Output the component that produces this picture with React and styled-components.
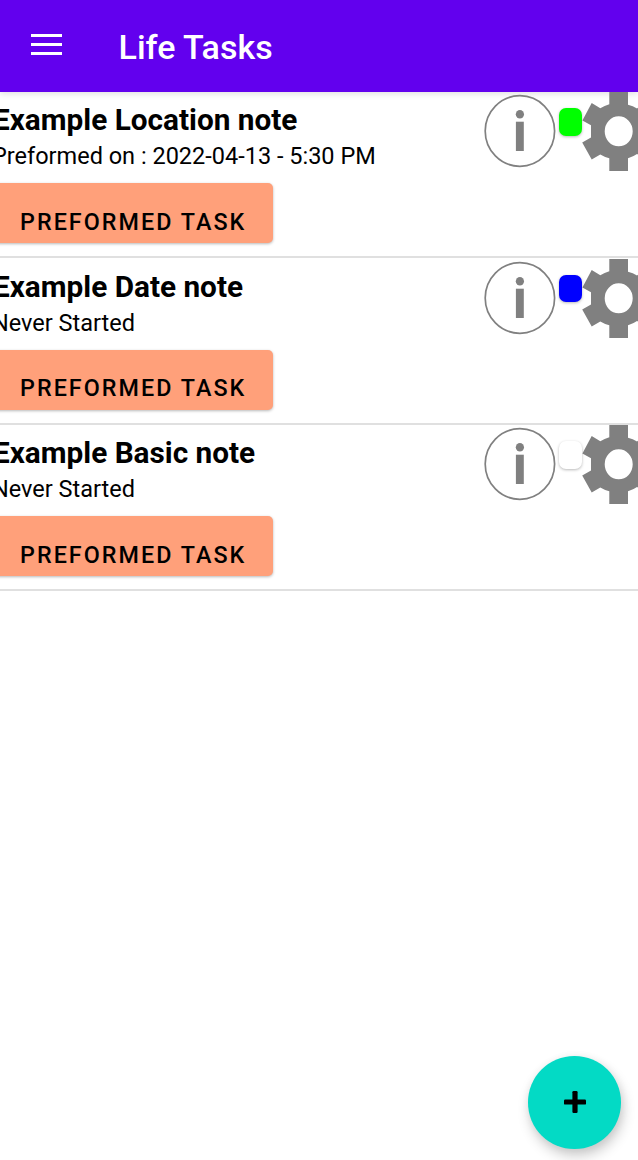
import React from 'react';
import styled, { createGlobalStyle } from 'styled-components';

const GlobalStyle = createGlobalStyle`
  * { box-sizing: border-box; }
  html, body { margin: 0; background: #fff; }
  body { overflow: hidden; font-family: Roboto, "Liberation Sans", sans-serif; color: #000; }
`;

const Screen = styled.div`
  position: relative;
  width: 638px;
  height: 1160px;
  overflow: hidden;
  display: flex;
  flex-direction: column;
  background: #fff;
`;

const Toolbar = styled.header`
  flex: none;
  height: 92px;
  display: flex;
  align-items: flex-start;
  background: #6200ee;
  box-shadow: 0 2px 6px rgba(0, 0, 0, 0.12);
  color: #fff;
`;

const MenuButton = styled.button`
  border: 0;
  padding: 0;
  margin: 34px 0 0 30.6px;
  width: 31px;
  height: 22px;
  background: none;
  svg { display: block; }
`;

const Title = styled.h1`
  margin: 27px 0 0 57px;
  font-size: 34px;
  line-height: 40px;
  font-weight: 500;
  white-space: nowrap;
`;

const TaskList = styled.main`
  display: flex;
  flex-direction: column;
`;

const Row = styled.section`
  height: 166.4px;
  display: flex;
  align-items: flex-start;
  justify-content: space-between;
  border-bottom: 2px solid #e0e0e0;
`;

const Details = styled.div`
  display: flex;
  flex-direction: column;
  align-items: flex-start;
  margin-left: -7px;
`;

const Name = styled.h2`
  margin: 10.3px 0 0;
  font-size: 29.75px;
  line-height: 36px;
  font-weight: 700;
  white-space: nowrap;
`;

const Status = styled.p`
  margin: 3px 0 0 -1px;
  font-size: 23.5px;
  line-height: 30px;
  white-space: nowrap;
`;

const TaskButton = styled.button`
  margin: 12.1px 0 0;
  width: 279.5px;
  height: 60px;
  padding: 17.4px 0 0 27px;
  border: 0;
  border-radius: 5px;
  background: #ffa07a;
  box-shadow: 0 1px 3px rgba(0, 0, 0, 0.28);
  color: #000;
  font: 500 23.3px/28px Roboto, "Liberation Sans", sans-serif;
  letter-spacing: 2.05px;
  text-align: left;
  text-transform: uppercase;
  white-space: nowrap;
`;

const Actions = styled.div`
  display: flex;
  align-items: flex-start;
  flex: none;
  width: 154px;
  padding-top: 0.2px;
  svg { display: block; flex: none; }
`;

const Swatch = styled.span`
  flex: none;
  width: 23px;
  height: 27.5px;
  margin: 16.2px 0 0 3px;
  border-radius: 7px;
  background: ${(p) => p.$color};
  box-shadow: 0 1px 3px rgba(0, 0, 0, 0.28);
`;

const Fab = styled.button`
  position: absolute;
  left: 528.3px;
  top: 1056.2px;
  width: 92.5px;
  height: 92.5px;
  display: flex;
  align-items: center;
  justify-content: center;
  border: 0;
  padding: 0;
  border-radius: 50%;
  background: #03dac5;
  box-shadow: 2px 7px 13px rgba(0, 0, 0, 0.2), 1px 1px 8px rgba(0, 0, 0, 0.06);
`;

const InfoIcon = () => (
  <svg width="72" height="79" viewBox="484 92 72 79" fill="#808080">
    <ellipse cx="519.9" cy="131" rx="34.7" ry="35.3" fill="none" stroke="#808080" strokeWidth="1.7" />
    <ellipse cx="519.9" cy="114.2" rx="4.1" ry="4.3" />
    <rect x="515.9" y="121.7" width="7.9" height="29.3" />
  </svg>
);

const GearIcon = () => (
  <svg width="56" height="79" viewBox="582 92 56 79" fill="#808080">
    <path
      fillRule="evenodd"
      d="M609.3 92H628V104.7Q633 106 637 108.5L645.7 103L655 120.7L646.4 125.5V137.3L655 142.3L645.7 159.3L637 154Q633 156.8 628 158.3V171H609.3V158.3Q604 156.8 600.3 154.5L591.7 159.5L582.2 142.5L591 137.5V125.3L582.4 120.5L591.7 103L600.3 108.3Q604.5 105.8 609.3 104.3ZM618.7 116.3A14 15 0 0 0 618.7 146.3A14 15 0 0 0 618.7 116.3Z"
    />
  </svg>
);

const tasks = [
  { name: 'Example Location note', status: 'Preformed on : 2022-04-13 - 5:30 PM', color: '#00ff00' },
  { name: 'Example Date note', status: 'Never Started', color: '#0000ff' },
  { name: 'Example Basic note', status: 'Never Started', color: '#ffffff' },
];

export default function App() {
  return (
    <Screen>
      <GlobalStyle />
      <Toolbar>
        <MenuButton aria-label="Menu">
          <svg width="31" height="22" viewBox="0 0 31 22" fill="#fff">
            <rect y="0" width="31" height="3" />
            <rect y="9" width="31" height="3" />
            <rect y="18" width="31" height="3" />
          </svg>
        </MenuButton>
        <Title>Life Tasks</Title>
      </Toolbar>
      <TaskList>
        {tasks.map((t) => (
          <Row key={t.name}>
            <Details>
              <Name>{t.name}</Name>
              <Status>{t.status}</Status>
              <TaskButton>Preformed task</TaskButton>
            </Details>
            <Actions>
              <InfoIcon />
              <Swatch $color={t.color} />
              <GearIcon />
            </Actions>
          </Row>
        ))}
      </TaskList>
      <Fab aria-label="Add task">
        <svg width="22" height="22" viewBox="0 0 22 22">
          <rect x="8.4" y="0" width="5.2" height="22" rx="1.2" />
          <rect x="0" y="8.4" width="22" height="5.2" rx="1.2" />
        </svg>
      </Fab>
    </Screen>
  );
}
